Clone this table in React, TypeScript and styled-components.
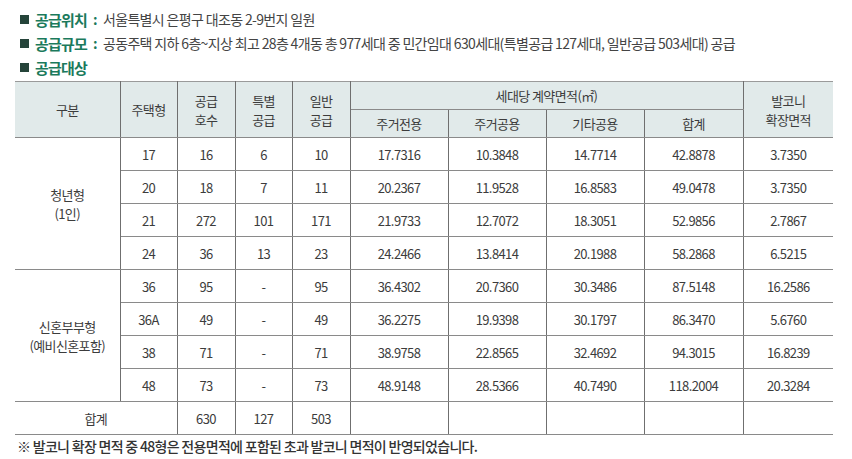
import React from "react";
import styled, { createGlobalStyle } from "styled-components";

const Global = createGlobalStyle`
  html, body { margin: 0; padding: 0; background: #fff; }
  body { font-family: "Noto Sans CJK KR", "Noto Sans", sans-serif; }
`;

const Page = styled.div`
  width: 852px;
  height: 459px;
  box-sizing: border-box;
  padding: 7px 0 0 15px;
  overflow: hidden;
`;

const InfoLine = styled.div`
  display: flex;
  align-items: center;
  height: 24px;
  padding-left: 5px;
  font-size: 14px;
  letter-spacing: -0.65px;
  color: #444;
  white-space: nowrap;
`;

const Bullet = styled.span`
  width: 9px;
  height: 9px;
  background: #25443a;
  margin-right: 6px;
  flex: none;
`;

const Label = styled.span`
  font-weight: 700;
  color: #1b7a5c;
  font-size: 15px;
  letter-spacing: -0.8px;
`;

const Colon = styled.span`
  font-weight: 700;
  color: #1b7a5c;
  margin: 0 6px 0 6px;
`;

const Table = styled.table`
  margin-top: 2px;
  width: 818px;
  border-collapse: collapse;
  table-layout: fixed;
  font-size: 13px;
  letter-spacing: -0.6px;
  color: #3c3c3c;
  border-top: 1.5px solid #9a9a9a;
  border-bottom: 1.5px solid #9a9a9a;
`;

const Th = styled.th<{ $last?: boolean }>`
  background: #e1eaea;
  font-weight: 400;
  height: 27px;
  padding: 0;
  line-height: 19px;
  border-bottom: 1px solid #8a8a8a;
  border-right: ${(p) => (p.$last ? "none" : "1px solid #6f6f6f")};
  text-align: center;
`;

const Td = styled.td<{ $last?: boolean }>`
  height: 32px;
  padding: 0;
  text-align: center;
  line-height: 19px;
  border-bottom: 1px solid #8a8a8a;
  border-right: ${(p) => (p.$last ? "none" : "1px solid #6f6f6f")};
`;

const Note = styled.div`
  height: 22px;
  display: flex;
  align-items: center;
  padding-left: 2px;
  font-size: 14px;
  font-weight: 500;
  letter-spacing: -0.7px;
  color: #333;
`;

type Row = [string, string, string, string, string, string, string, string, string];

const youth: Row[] = [
  ["17", "16", "6", "10", "17.7316", "10.3848", "14.7714", "42.8878", "3.7350"],
  ["20", "18", "7", "11", "20.2367", "11.9528", "16.8583", "49.0478", "3.7350"],
  ["21", "272", "101", "171", "21.9733", "12.7072", "18.3051", "52.9856", "2.7867"],
  ["24", "36", "13", "23", "24.2466", "13.8414", "20.1988", "58.2868", "6.5215"],
];

const couple: Row[] = [
  ["36", "95", "-", "95", "36.4302", "20.7360", "30.3486", "87.5148", "16.2586"],
  ["36A", "49", "-", "49", "36.2275", "19.9398", "30.1797", "86.3470", "5.6760"],
  ["38", "71", "-", "71", "38.9758", "22.8565", "32.4692", "94.3015", "16.8239"],
  ["48", "73", "-", "73", "48.9148", "28.5366", "40.7490", "118.2004", "20.3284"],
];

const widths = [105, 57, 58, 57, 58, 98, 98, 98, 99, 90];

const Group: React.FC<{ label: React.ReactNode; rows: Row[] }> = ({ label, rows }) => (
  <>
    {rows.map((r, i) => (
      <tr key={i}>
        {i === 0 && <Td rowSpan={rows.length}>{label}</Td>}
        {r.map((c, j) => (
          <Td key={j} $last={j === r.length - 1}>
            {c}
          </Td>
        ))}
      </tr>
    ))}
  </>
);

export default function App() {
  return (
    <Page>
      <Global />
      <InfoLine>
        <Bullet />
        <Label>공급위치</Label>
        <Colon>:</Colon>
        서울특별시 은평구 대조동 2-9번지 일원
      </InfoLine>
      <InfoLine>
        <Bullet />
        <Label>공급규모</Label>
        <Colon>:</Colon>
        공동주택 지하 6층~지상 최고 28층 4개동 총 977세대 중 민간임대 630세대(특별공급 127세대, 일반공급 503세대) 공급
      </InfoLine>
      <InfoLine>
        <Bullet />
        <Label>공급대상</Label>
      </InfoLine>
      <Table>
        <colgroup>
          {widths.map((w, i) => (
            <col key={i} style={{ width: w }} />
          ))}
        </colgroup>
        <thead>
          <tr>
            <Th rowSpan={2}>구분</Th>
            <Th rowSpan={2}>주택형</Th>
            <Th rowSpan={2}>
              공급
              <br />
              호수
            </Th>
            <Th rowSpan={2}>
              특별
              <br />
              공급
            </Th>
            <Th rowSpan={2}>
              일반
              <br />
              공급
            </Th>
            <Th colSpan={4}>세대당 계약면적(㎡)</Th>
            <Th rowSpan={2} $last>
              발코니
              <br />
              확장면적
            </Th>
          </tr>
          <tr>
            <Th>주거전용</Th>
            <Th>주거공용</Th>
            <Th>기타공용</Th>
            <Th>합계</Th>
          </tr>
        </thead>
        <tbody>
          <Group
            label={
              <>
                청년형
                <br />
                (1인)
              </>
            }
            rows={youth}
          />
          <Group
            label={
              <>
                신혼부부형
                <br />
                (예비신혼포함)
              </>
            }
            rows={couple}
          />
          <tr>
            <Td colSpan={2}>합계</Td>
            <Td>630</Td>
            <Td>127</Td>
            <Td>503</Td>
            <Td />
            <Td />
            <Td />
            <Td />
            <Td $last />
          </tr>
        </tbody>
      </Table>
      <Note>※ 발코니 확장 면적 중 48형은 전용면적에 포함된 초과 발코니 면적이 반영되었습니다.</Note>
    </Page>
  );
}
